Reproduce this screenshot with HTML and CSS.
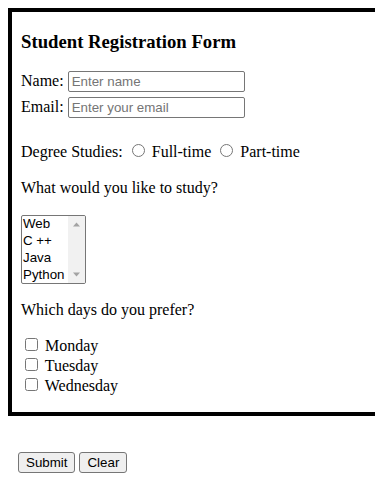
FILE: index.html
```html
<!DOCTYPE html>
<html lang="en">
<head>
<meta charset="utf-8">
<title>Student Registration Form</title>
<link rel="stylesheet" href="styles.css">
</head>
<body>
<form class="form">
  <div class="box">
    <h3 class="title">Student Registration Form</h3>
    <div class="field">
      <label for="name">Name:</label>
      <input class="text" id="name" type="text" placeholder="Enter name">
    </div>
    <div class="field">
      <label for="email">Email:</label>
      <input class="text" id="email" type="email" placeholder="Enter your email">
    </div>
    <div class="line degree">Degree Studies: <input class="radio" type="radio" name="deg" id="ft"> <label for="ft">Full-time</label> <input class="radio" type="radio" name="deg" id="pt"> <label for="pt">Part-time</label></div>
    <div class="line question">What would you like to study?</div>
    <div class="listbox" role="listbox" aria-label="Courses">
      <div class="opts">
        <div class="opt" role="option">Web</div>
        <div class="opt" role="option">C ++</div>
        <div class="opt" role="option">Java</div>
        <div class="opt" role="option">Python</div>
      </div>
      <div class="scroll">
        <svg class="arrow" width="17" height="17" viewBox="0 0 17 17"><path d="M5 10.5 L8.5 6.5 L12 10.5 Z" fill="#a3a3a3"/></svg>
        <svg class="arrow" width="17" height="17" viewBox="0 0 17 17"><path d="M5 6.5 L8.5 10.5 L12 6.5 Z" fill="#a3a3a3"/></svg>
      </div>
    </div>
    <div class="line question2">Which days do you prefer?</div>
    <div class="days">
      <div class="line check"><input class="cb" type="checkbox" id="mon"> <label for="mon">Monday</label></div>
      <div class="line check"><input class="cb" type="checkbox" id="tue"> <label for="tue">Tuesday</label></div>
      <div class="line check"><input class="cb" type="checkbox" id="wed"> <label for="wed">Wednesday</label></div>
    </div>
  </div>
  <div class="actions">
    <button class="btn" type="submit">Submit</button>
    <button class="btn" type="reset">Clear</button>
  </div>
</form>
</body>
</html>
```

FILE: styles.css
```css
html {
  overflow: hidden;
}

body {
  margin: 8px;
  font-family: "Liberation Serif", "Times New Roman", serif;
  font-size: 16px;
  color: #000;
  background: #fff;
}

.box {
  border: 4px solid #000;
  border-right: 0;
  margin-right: -8px;
  padding: 0 10px 16.4px 9px;
}

.title {
  font-size: 18.72px;
  font-weight: bold;
  margin: 18.72px 0;
}

.field {
  display: flex;
  align-items: baseline;
  gap: 4px;
  height: 21px;
}

.field + .field {
  margin-top: 5px;
}

.text {
  box-sizing: border-box;
  width: 177px;
  height: 21px;
  margin: 0;
  padding: 1px 3px;
  border: 1px solid #767676;
  border-radius: 2px;
  font-family: "Liberation Sans", Arial, sans-serif;
  font-size: 13.333px;
  color: #000;
  background: #fff;
}

.text::placeholder {
  color: #757575;
}

.line {
  line-height: 20px;
}

.degree {
  margin-top: 23.6px;
}

.radio {
  margin: 0 3px 0 5px;
  width: 13px;
  height: 13px;
  vertical-align: baseline;
}

.question {
  margin-top: 16px;
}

.listbox {
  margin-top: 17.4px;
  box-sizing: border-box;
  width: 65px;
  height: 69px;
  border: 1px solid #767676;
  border-radius: 2px;
  display: flex;
  font-family: "Liberation Sans", Arial, sans-serif;
  font-size: 13.333px;
  background: #fff;
  overflow: hidden;
}

.opts {
  flex: 1;
  padding-left: 1px;
}

.opt {
  line-height: 15.75px;
  padding-bottom: 1px;
  white-space: nowrap;
}

.scroll {
  width: 17px;
  background: #f1f1f1;
  display: flex;
  flex-direction: column;
  justify-content: space-between;
}

.arrow {
  display: block;
}

.question2 {
  margin-top: 15.6px;
}

.days {
  margin-top: 16px;
}

.cb {
  margin: 0 3px 0 4px;
  width: 13px;
  height: 13px;
  vertical-align: baseline;
}

.actions {
  margin-top: 36px;
  padding-left: 10px;
  display: flex;
  gap: 4px;
}

.btn {
  box-sizing: border-box;
  height: 21px;
  margin: 0;
  padding: 1px 7px;
  border: 1px solid #767676;
  border-radius: 3px;
  background: #efefef;
  font-family: "Liberation Sans", Arial, sans-serif;
  font-size: 13.333px;
  color: #000;
}
```
